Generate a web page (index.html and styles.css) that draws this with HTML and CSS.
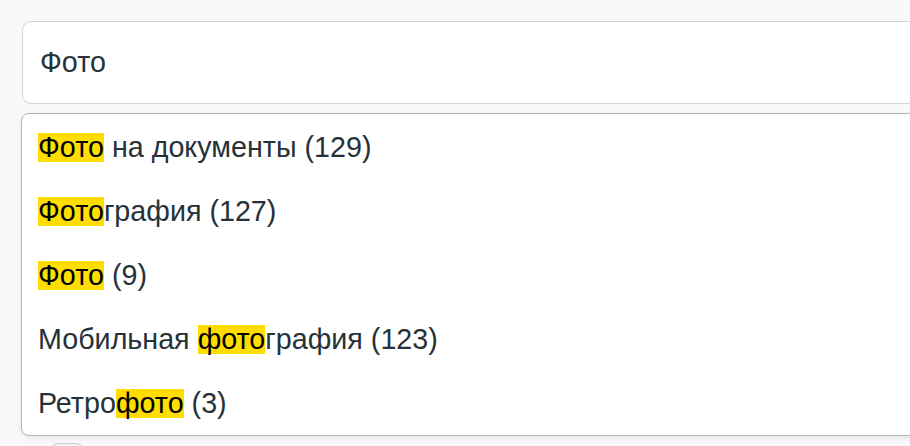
FILE: index.html
```html
<!DOCTYPE html>
<html lang="ru">
<head>
<meta charset="utf-8">
<link rel="stylesheet" href="styles.css">
</head>
<body>
<div class="page">
  <div class="field">Фото</div>
  <ul class="menu">
    <li class="item"><mark>Фото</mark> на документы (129)</li>
    <li class="item"><mark>Фото</mark>графия (127)</li>
    <li class="item"><mark>Фото</mark> (9)</li>
    <li class="item">Мобильная <mark>фото</mark>графия (123)</li>
    <li class="item">Ретро<mark>фото</mark> (3)</li>
  </ul>
  <div class="check"></div>
</div>
</body>
</html>
```
FILE: styles.css
```css
html, body {
  margin: 0;
  padding: 0;
  background: #f9f9fb;
  overflow: hidden;
}
body {
  width: 910px;
  height: 446px;
  font-family: "Liberation Sans", Arial, sans-serif;
  color: #263238;
}
.page {
  padding: 21px 0 0 22px;
}
.field {
  box-sizing: border-box;
  width: 920px;
  height: 83px;
  border: 1px solid #cfd3da;
  border-radius: 9px;
  background: #fff;
  padding: 26px 17px 0;
  font-size: 28.7px;
  line-height: 29px;
}
.menu {
  list-style: none;
  margin: 9px 0 0 -1px;
  padding: 0;
  box-sizing: border-box;
  width: 920px;
  height: 323px;
  border: 1px solid #aeb5be;
  border-radius: 8px;
  background: #fff;
  box-shadow: 0 2px 6px rgba(0,0,0,0.08);
}
.item {
  box-sizing: border-box;
  height: 64px;
  padding: 19px 16px 0 16px;
  font-size: 28.7px;
  line-height: 29px;
  white-space: nowrap;
}
mark {
  display: inline-block;
  vertical-align: top;
  background: #ffdd00;
  color: #000;
}
.check {
  margin: 7px 0 0 28px;
  width: 32px;
  height: 20px;
  border: 1px solid #c8ccd2;
  border-radius: 8px;
  background: #f4f5f7;
}
```
